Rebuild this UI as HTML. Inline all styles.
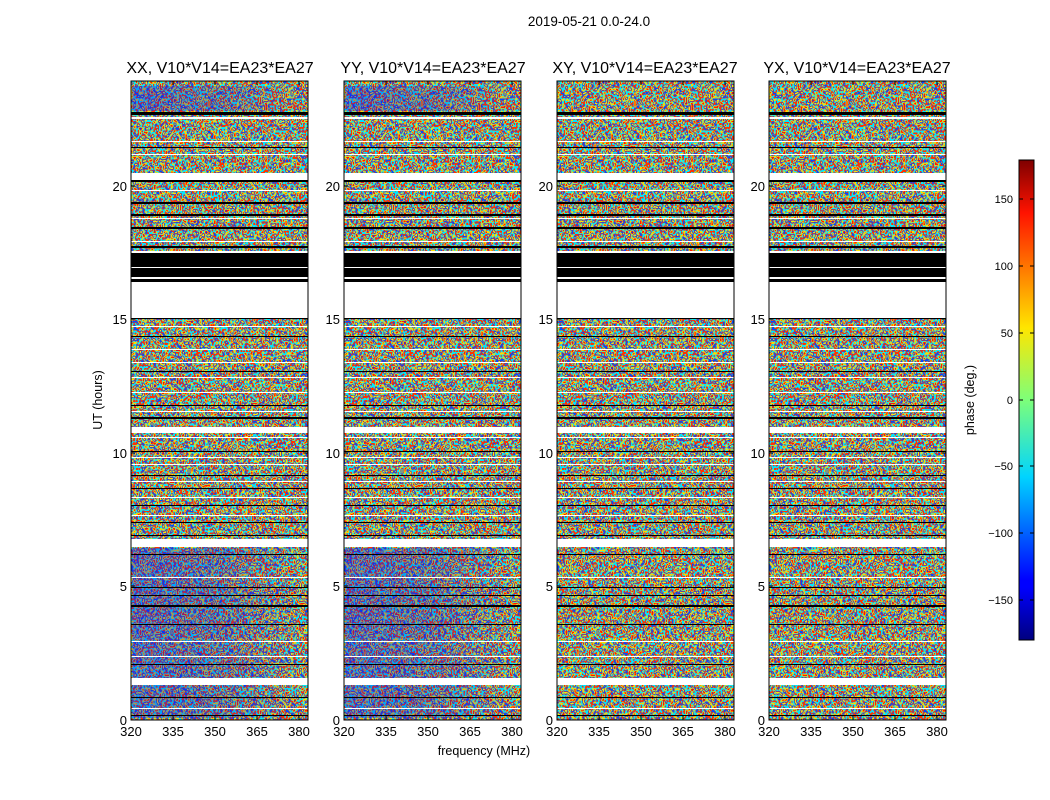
<!DOCTYPE html>
<html><head><meta charset="utf-8"><style>
html,body{margin:0;padding:0;background:#fff;}
svg{display:block;font-family:"Liberation Sans","DejaVu Sans",sans-serif;}
</style></head><body>
<svg width="1050" height="800" viewBox="0 0 1050 800" xmlns="http://www.w3.org/2000/svg">
<defs>
<filter id="nz" x="0" y="0" width="100%" height="100%" filterUnits="objectBoundingBox" color-interpolation-filters="sRGB">
<feTurbulence type="fractalNoise" baseFrequency="0.35 0.28" numOctaves="1" seed="7" result="t"/>
<feColorMatrix in="t" type="matrix" values="1 0 0 0 0  1 0 0 0 0  1 0 0 0 0  0 0 0 0 1" result="g"/>
<feComponentTransfer in="g">
<feFuncR type="discrete" tableValues="0 1 0 1 0 1 0 1 1 0 1 0"/>
<feFuncG type="discrete" tableValues="0.2 0.1 0.85 0.9 0.3 0.2 0.9 0.85 0.1 0.2 0.9 0.85"/>
<feFuncB type="discrete" tableValues="1 0 1 0 1 0 1 0 0 1 0 1"/>
<feFuncA type="discrete" tableValues="1 1"/>
</feComponentTransfer>
</filter>
<linearGradient id="jet" x1="0" y1="1" x2="0" y2="0">
<stop offset="0" stop-color="#00007f"/><stop offset="0.11" stop-color="#0000ff"/>
<stop offset="0.125" stop-color="#0000ff"/><stop offset="0.34" stop-color="#00d4ff"/>
<stop offset="0.5" stop-color="#7dff7a"/><stop offset="0.65" stop-color="#ffe600"/>
<stop offset="0.89" stop-color="#ff1300"/><stop offset="1" stop-color="#7f0000"/>
</linearGradient>
<linearGradient id="blu" x1="0" y1="0" x2="1" y2="0">
<stop offset="0" stop-color="#0010ff" stop-opacity="0.35"/><stop offset="0.5" stop-color="#0010e0" stop-opacity="0.25"/><stop offset="1" stop-color="#0000ff" stop-opacity="0"/>
</linearGradient>
<g id="stripes">
<rect x="0" y="31" width="177" height="3" fill="#000"/>
<rect x="0" y="36" width="177" height="2" fill="#fff"/>
<rect x="0" y="60" width="177" height="1" fill="#fff"/>
<rect x="0" y="66" width="177" height="1" fill="#000"/>
<rect x="0" y="73" width="177" height="1" fill="#fff"/>
<rect x="0" y="92" width="177" height="7" fill="#fff"/>
<rect x="0" y="99" width="177" height="2" fill="#000"/>
<rect x="0" y="109" width="177" height="1" fill="#fff"/>
<rect x="0" y="121" width="177" height="2" fill="#000"/>
<rect x="0" y="133" width="177" height="2" fill="#000"/>
<rect x="0" y="137" width="177" height="1" fill="#fff"/>
<rect x="0" y="146" width="177" height="2" fill="#000"/>
<rect x="0" y="160" width="177" height="1" fill="#fff"/>
<rect x="0" y="165" width="177" height="2" fill="#000"/>
<rect x="0" y="170" width="177" height="3" fill="#fff"/>
<rect x="0" y="172" width="177" height="29" fill="#000"/>
<rect x="0" y="186" width="177" height="1" fill="#fff"/>
<rect x="0" y="196" width="177" height="2" fill="#fff"/>
<rect x="0" y="201" width="177" height="36" fill="#fff"/>
<rect x="0" y="237" width="177" height="1" fill="#000"/>
<rect x="0" y="245" width="177" height="1" fill="#fff"/>
<rect x="0" y="255" width="177" height="1" fill="#000"/>
<rect x="0" y="268" width="177" height="1" fill="#fff"/>
<rect x="0" y="281" width="177" height="1" fill="#fff"/>
<rect x="0" y="290" width="177" height="1" fill="#000"/>
<rect x="0" y="296" width="177" height="1" fill="#fff"/>
<rect x="0" y="311" width="177" height="1" fill="#fff"/>
<rect x="0" y="324" width="177" height="1" fill="#000"/>
<rect x="0" y="330" width="177" height="1" fill="#fff"/>
<rect x="0" y="336" width="177" height="2" fill="#000"/>
<rect x="0" y="346" width="177" height="6" fill="#fff"/>
<rect x="0" y="356" width="177" height="1" fill="#fff"/>
<rect x="0" y="370" width="177" height="1" fill="#000"/>
<rect x="0" y="376" width="177" height="1" fill="#fff"/>
<rect x="0" y="383" width="177" height="1" fill="#fff"/>
<rect x="0" y="394" width="177" height="1" fill="#000"/>
<rect x="0" y="400" width="177" height="1" fill="#fff"/>
<rect x="0" y="407" width="177" height="1" fill="#000"/>
<rect x="0" y="416" width="177" height="1" fill="#fff"/>
<rect x="0" y="424" width="177" height="1" fill="#000"/>
<rect x="0" y="434" width="177" height="1" fill="#fff"/>
<rect x="0" y="441" width="177" height="1" fill="#000"/>
<rect x="0" y="454" width="177" height="1" fill="#000"/>
<rect x="0" y="458" width="177" height="8" fill="#fff"/>
<rect x="0" y="473" width="177" height="1" fill="#000"/>
<rect x="0" y="496" width="177" height="1" fill="#fff"/>
<rect x="0" y="506" width="177" height="1" fill="#000"/>
<rect x="0" y="514" width="177" height="1" fill="#000"/>
<rect x="0" y="524" width="177" height="2" fill="#000"/>
<rect x="0" y="543" width="177" height="1" fill="#000"/>
<rect x="0" y="560" width="177" height="1" fill="#fff"/>
<rect x="0" y="575" width="177" height="1" fill="#fff"/>
<rect x="0" y="583" width="177" height="1" fill="#000"/>
<rect x="0" y="597" width="177" height="7" fill="#fff"/>
<rect x="0" y="616" width="177" height="1" fill="#000"/>
<rect x="0" y="627" width="177" height="1" fill="#fff"/>
<rect x="0" y="634" width="177" height="1" fill="#000"/>
</g>
<rect id="noise" x="0" y="0" width="177" height="639" fill="#888" filter="url(#nz)"/>
<g id="frame">
<use href="#stripes"/>
<rect x="0" y="0" width="177" height="639" fill="none" stroke="#000" stroke-width="1"/>
<g stroke="#000" stroke-width="1">
<line x1="0" y1="639" x2="4" y2="639"/><line x1="0" y1="505" x2="4" y2="505"/><line x1="0" y1="372" x2="4" y2="372"/><line x1="0" y1="238" x2="4" y2="238"/><line x1="0" y1="105" x2="4" y2="105"/>
<line x1="173" y1="505" x2="177" y2="505"/><line x1="173" y1="372" x2="177" y2="372"/><line x1="173" y1="238" x2="177" y2="238"/><line x1="173" y1="105" x2="177" y2="105"/>
<line x1="42" y1="639" x2="42" y2="635"/><line x1="84" y1="639" x2="84" y2="635"/><line x1="126" y1="639" x2="126" y2="635"/><line x1="168" y1="639" x2="168" y2="635"/>
<line x1="42" y1="0" x2="42" y2="4"/><line x1="84" y1="0" x2="84" y2="4"/><line x1="126" y1="0" x2="126" y2="4"/><line x1="168" y1="0" x2="168" y2="4"/>
</g>
<g font-size="13" fill="#000" text-anchor="end">
<text x="-4" y="644">0</text><text x="-4" y="510">5</text><text x="-4" y="377">10</text><text x="-4" y="243">15</text><text x="-4" y="110">20</text>
</g>
<g font-size="13" fill="#000" text-anchor="middle">
<text x="0" y="655">320</text><text x="42" y="655">335</text><text x="84" y="655">350</text><text x="126" y="655">365</text><text x="168" y="655">380</text>
</g>
</g>
</defs>

<text x="589" y="26" font-size="13.5" text-anchor="middle">2019-05-21 0.0-24.0</text>

<g transform="translate(131,81)">
<use href="#noise"/>
<rect x="1" y="5" width="175" height="25" fill="url(#blu)"/>
<rect x="1" y="467" width="175" height="170" fill="url(#blu)"/>
<use href="#frame"/>
</g>
<g transform="translate(344,81)">
<use href="#noise"/>
<rect x="1" y="5" width="175" height="25" fill="url(#blu)"/>
<rect x="1" y="467" width="175" height="170" fill="url(#blu)"/>
<use href="#frame"/>
</g>
<g transform="translate(557,81)"><use href="#noise"/><use href="#frame"/></g>
<g transform="translate(769,81)"><use href="#noise"/><use href="#frame"/></g>

<g font-size="16" text-anchor="middle" fill="#000">
<text x="220" y="73">XX, V10*V14=EA23*EA27</text>
<text x="433" y="73">YY, V10*V14=EA23*EA27</text>
<text x="645" y="73">XY, V10*V14=EA23*EA27</text>
<text x="857" y="73">YX, V10*V14=EA23*EA27</text>
</g>
<text x="484" y="755" font-size="12.5" text-anchor="middle">frequency (MHz)</text>
<text transform="translate(102,400) rotate(-90)" font-size="12.5" text-anchor="middle">UT (hours)</text>

<rect x="1019" y="160" width="15" height="480" fill="url(#jet)" stroke="#000" stroke-width="1"/>
<g stroke="#000">
<line x1="1019" y1="199" x2="1023" y2="199"/><line x1="1030" y1="199" x2="1034" y2="199"/>
<line x1="1019" y1="266" x2="1023" y2="266"/><line x1="1030" y1="266" x2="1034" y2="266"/>
<line x1="1019" y1="333" x2="1023" y2="333"/><line x1="1030" y1="333" x2="1034" y2="333"/>
<line x1="1019" y1="400" x2="1023" y2="400"/><line x1="1030" y1="400" x2="1034" y2="400"/>
<line x1="1019" y1="466" x2="1023" y2="466"/><line x1="1030" y1="466" x2="1034" y2="466"/>
<line x1="1019" y1="533" x2="1023" y2="533"/><line x1="1030" y1="533" x2="1034" y2="533"/>
<line x1="1019" y1="600" x2="1023" y2="600"/><line x1="1030" y1="600" x2="1034" y2="600"/>
</g>
<g font-size="11" text-anchor="end">
<text x="1013" y="203">150</text><text x="1013" y="270">100</text><text x="1013" y="337">50</text><text x="1013" y="404">0</text>
<text x="1013" y="470">−50</text><text x="1013" y="537">−100</text><text x="1013" y="604">−150</text>
</g>
<text transform="translate(974,400) rotate(-90)" font-size="12.5" text-anchor="middle">phase (deg.)</text>
</svg>
</body></html>
